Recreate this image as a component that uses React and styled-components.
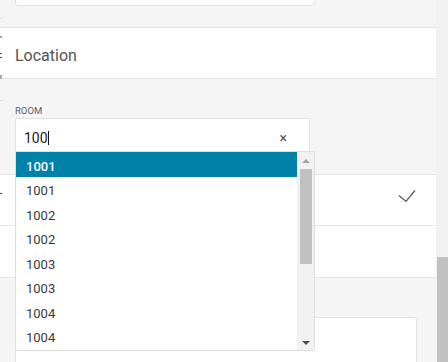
import React from "react";
import styled, { createGlobalStyle } from "styled-components";

const Global = createGlobalStyle`
  html, body { margin: 0; padding: 0; background: #f5f5f5; overflow: hidden; }
  body { font-family: Roboto, "Liberation Sans", Arial, sans-serif; }
  * { box-sizing: border-box; }
`;

const Page = styled.div`
  display: flex;
  width: 448px;
  height: 362px;
  overflow: hidden;
  background: #f5f5f5;
`;

const Main = styled.div`
  position: relative;
  width: 436px;
  flex: none;
  display: flex;
  flex-direction: column;
`;

const PageScroll = styled.div`
  width: 12px;
  flex: none;
  background: #f1f1f1;
  display: flex;
  flex-direction: column;
  padding-top: 257px;
  padding-left: 1px;
`;

const PageThumb = styled.div`
  flex: 1;
  background: #c1c1c1;
`;

const FieldBox = styled.div`
  margin-left: 15px;
  width: ${(p) => p.$w}px;
  height: ${(p) => p.$h}px;
  margin-top: ${(p) => p.$mt || 0}px;
  background: #fff;
  border: 1px solid #e3e3e3;
  border-radius: 3px;
  flex: none;
`;

const Band = styled.div`
  height: ${(p) => p.$h}px;
  flex: none;
  background: #fff;
  border-top: 1px solid #e4e4e4;
  border-bottom: ${(p) => (p.$last ? "1px solid #e4e4e4" : "none")};
  margin-top: ${(p) => p.$mt || 0}px;
  display: flex;
  align-items: center;
  padding: 0 15px;
  justify-content: ${(p) => p.$justify || "flex-start"};
`;

const BandTitle = styled.div`
  font-size: 16px;
  color: #555;
  padding-top: 5px;
`;

const Check = styled.svg`
  width: 18px;
  height: 14px;
  margin-right: 5px;
  margin-top: -8px;
`;

const RoomField = styled.div`
  position: relative;
  margin: 26px 0 0 15px;
  width: 300px;
  flex: none;
`;

const Label = styled.div`
  font-size: 9.5px;
  line-height: 12px;
  color: #5c6075;
  margin-bottom: 1px;
`;

const Input = styled.div`
  position: relative;
  width: 295px;
  height: 36px;
  background: #fff;
  border: 1px solid #e3e3e3;
  border-radius: 2px;
  display: flex;
  align-items: center;
  padding: 3px 22px 0 8px;
  font-size: 14px;
  color: #222;
`;

const Value = styled.span`
  flex: 1;
  display: flex;
  align-items: center;
`;

const Caret = styled.span`
  display: inline-block;
  width: 1px;
  height: 14px;
  background: #111;
`;

const Clear = styled.span`
  font-size: 14px;
  color: #555;
  line-height: 1;
`;

const Dropdown = styled.div`
  position: absolute;
  left: 0;
  top: 46px;
  width: 300px;
  height: 200px;
  background: #fff;
  border: 1px solid #dedede;
  border-radius: 0 0 2px 2px;
  display: flex;
  z-index: 5;
`;

const List = styled.div`
  flex: 1;
  overflow: hidden;
`;

const Item = styled.div`
  height: 24.5px;
  padding: 4.5px 10px 0;
  font-size: 13px;
  line-height: 19.5px;
  color: ${(p) => (p.$active ? "#fff" : "#3a3a3a")};
  background: ${(p) => (p.$active ? "#0081a7" : "transparent")};
  font-weight: ${(p) => (p.$active ? 500 : 400)};
`;

const ListScroll = styled.div`
  width: 17px;
  flex: none;
  background: #f1f1f1;
  display: flex;
  flex-direction: column;
  align-items: center;
`;

const ArrowBox = styled.div`
  height: 17px;
  flex: none;
  display: flex;
  align-items: center;
  justify-content: center;
  width: 100%;
`;

const Arrow = styled.div`
  width: 0;
  height: 0;
  border-left: 4px solid transparent;
  border-right: 4px solid transparent;
  ${(p) =>
    p.$up
      ? "border-bottom: 4px solid #a3a3a3;"
      : "border-top: 4px solid #505050; margin-top: 3px;"}
`;

const Thumb = styled.div`
  width: 12px;
  height: 95px;
  background: #c1c1c1;
  margin-left: 1px;
  flex: none;
`;

const Spacer = styled.div`
  flex: 1;
`;

const EdgeMarks = styled.div`
  position: absolute;
  left: 0;
  top: 0;
  width: 2px;
  display: flex;
  flex-direction: column;
`;

const Mark = styled.div`
  width: 2px;
  height: ${(p) => p.$h || 1}px;
  margin-top: ${(p) => p.$mt}px;
  background: ${(p) => p.$c};
`;

const items = ["1001", "1001", "1002", "1002", "1003", "1003", "1004", "1004"];

export default function App() {
  return (
    <>
      <Global />
      <Page>
        <Main>
          <FieldBox $w={300} $h={36} $mt={-30} />
          <Band $h={52} $mt={21} $last>
            <BandTitle>Location</BandTitle>
          </Band>
          <RoomField>
            <Label>ROOM</Label>
            <Input>
              <Value>
                100
                <Caret />
              </Value>
              <Clear>×</Clear>
            </Input>
            <Dropdown>
              <List>
                {items.map((it, i) => (
                  <Item key={i} $active={i === 0}>
                    {it}
                  </Item>
                ))}
              </List>
              <ListScroll>
                <ArrowBox>
                  <Arrow $up />
                </ArrowBox>
                <Thumb />
                <Spacer />
                <ArrowBox>
                  <Arrow />
                </ArrowBox>
              </ListScroll>
            </Dropdown>
          </RoomField>
          <Band $h={51} $mt={20} $justify="flex-end">
            <Check viewBox="0 0 18 14">
              <polyline
                points="1,6.5 8,12.5 17,1.5"
                fill="none"
                stroke="#555"
                strokeWidth="1.2"
              />
            </Check>
          </Band>
          <Band $h={53} $last />
          <FieldBox $w={402} $h={60} $mt={39} />
          <EdgeMarks>
            <Mark $mt={18} $c="#d8d8d8" />
            <Mark $mt={17} $c="#a0a0a0" $h={2} />
            <Mark $mt={15} $c="#555" />
            <Mark $mt={3} $c="#555" />
            <Mark $mt={17} $c="#aaa" $h={4} />
            <Mark $mt={21} $c="#d0d0d0" />
            <Mark $mt={92} $c="#444" />
          </EdgeMarks>
        </Main>
        <PageScroll>
          <PageThumb />
        </PageScroll>
      </Page>
    </>
  );
}
